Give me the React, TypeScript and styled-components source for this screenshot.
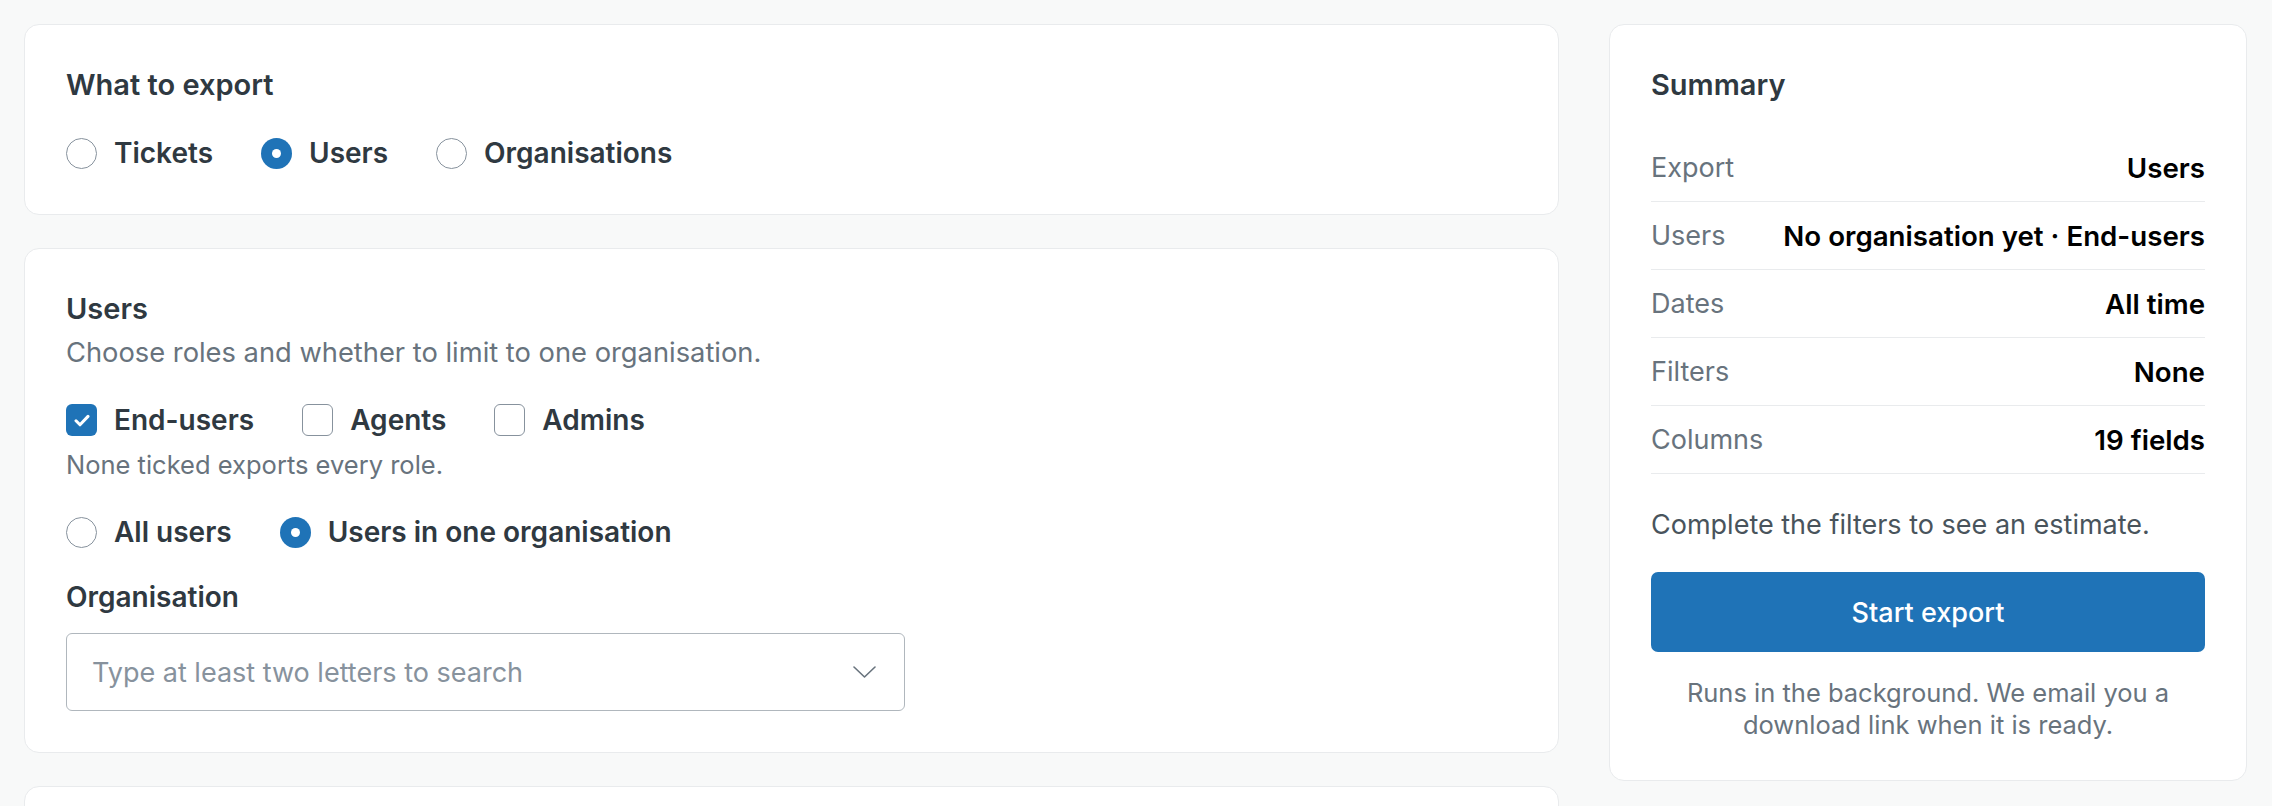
import React from 'react';
import styled, { createGlobalStyle } from 'styled-components';

const GlobalStyle = createGlobalStyle`
  html, body {
    margin: 0;
    padding: 0;
    overflow: hidden;
    background: #f8f9f9;
  }
  * {
    box-sizing: border-box;
  }
  body {
    font-family: Inter, "Noto Sans", "Liberation Sans", sans-serif;
    color: #2f3941;
  }
`;

const Page = styled.div`
  display: grid;
  grid-template-columns: 1fr 638px;
  gap: 50px;
  align-items: start;
  padding: 24px 25px 24px 24px;
`;

const Column = styled.div`
  display: flex;
  flex-direction: column;
  gap: 33px;
`;

const Card = styled.section<{ $minHeight?: number; $padBottom?: number }>`
  background: #fff;
  border: 1.5px solid #e9ebed;
  border-radius: 15px;
  padding: 40px 41px ${(p) => p.$padBottom ?? 43}px;
  min-height: ${(p) => (p.$minHeight ? `${p.$minHeight}px` : 'auto')};
`;

const Title = styled.h2`
  margin: 0;
  font-size: 29px;
  line-height: 40px;
  font-weight: 600;
  color: #2f3941;
`;

const Hint = styled.p<{ $small?: boolean }>`
  margin: ${(p) => (p.$small ? '10px 0 0' : '6px 0 0')};
  font-size: ${(p) => (p.$small ? '25.5px' : '27.3px')};
  line-height: ${(p) => (p.$small ? '33px' : '36px')};
  color: #68737d;
`;

const OptionRow = styled.div<{ $top: number }>`
  display: flex;
  align-items: center;
  gap: 48px;
  margin-top: ${(p) => p.$top}px;
`;

const Option = styled.label`
  display: flex;
  align-items: center;
  gap: 17px;
  font-size: 28px;
  line-height: 36px;
  font-weight: 600;
  color: #2f3941;
  cursor: pointer;
`;

const RadioMark = styled.span<{ $on?: boolean }>`
  width: 31px;
  height: 31px;
  border-radius: 50%;
  flex-shrink: 0;
  display: flex;
  align-items: center;
  justify-content: center;
  border: ${(p) => (p.$on ? 'none' : '1.5px solid #87929d')};
  background: ${(p) => (p.$on ? '#1f73b7' : '#fff')};

  &::after {
    content: '';
    display: ${(p) => (p.$on ? 'block' : 'none')};
    width: 9px;
    height: 9px;
    border-radius: 50%;
    background: #fff;
  }
`;

const CheckMark = styled.span<{ $on?: boolean }>`
  width: 31px;
  height: 32px;
  border-radius: 6px;
  flex-shrink: 0;
  display: flex;
  align-items: center;
  justify-content: center;
  border: ${(p) => (p.$on ? 'none' : '1.5px solid #87929d')};
  background: ${(p) => (p.$on ? '#1f73b7' : '#fff')};
`;

const FieldLabel = styled.div`
  margin-top: 29px;
  font-size: 28px;
  line-height: 36px;
  font-weight: 600;
  color: #2f3941;
`;

const Select = styled.div`
  margin-top: 18px;
  width: 839px;
  height: 78px;
  border: 1.5px solid #b0b7bd;
  border-radius: 6px;
  background: #fff;
  display: flex;
  align-items: center;
  justify-content: space-between;
  padding: 0 28px 0 25px;
`;

const Placeholder = styled.span`
  font-size: 27px;
  color: #87929d;
`;

const SummaryList = styled.dl`
  margin: 29px 0 0;
`;

const SummaryRow = styled.div`
  display: flex;
  justify-content: space-between;
  align-items: center;
  gap: 24px;
  padding: 16px 0 15px;
  border-bottom: 1.5px solid #e9ebed;
  line-height: 36px;
`;

const Term = styled.dt`
  font-size: 27px;
  color: #68737d;
`;

const Value = styled.dd`
  margin: 0;
  font-size: 27.7px;
  font-weight: 600;
  color: #000;
`;

const Estimate = styled.p`
  margin: 33px 0 0;
  font-size: 27px;
  line-height: 36px;
  color: #49545c;
`;

const PrimaryButton = styled.button`
  margin-top: 29px;
  width: 100%;
  height: 80px;
  border: none;
  border-radius: 7px;
  background: #1f73b7;
  color: #fff;
  font-family: inherit;
  font-size: 27px;
  font-weight: 500;
  cursor: pointer;
`;

const Footnote = styled.p`
  margin: 25px 0 0;
  text-align: center;
  font-size: 25.5px;
  line-height: 31.5px;
  color: #68737d;
`;

function Radio({ on, children }: { on?: boolean; children: React.ReactNode }) {
  return (
    <Option>
      <RadioMark $on={on} />
      {children}
    </Option>
  );
}

function Checkbox({ on, children }: { on?: boolean; children: React.ReactNode }) {
  return (
    <Option>
      <CheckMark $on={on}>
        {on && (
          <svg width="16" height="13" viewBox="0 0 16 13" fill="none">
            <path d="M2 6.8l4 4L14 2.4" stroke="#fff" strokeWidth="3" strokeLinecap="round" strokeLinejoin="round" />
          </svg>
        )}
      </CheckMark>
      {children}
    </Option>
  );
}

const summary = [
  ['Export', 'Users'],
  ['Users', 'No organisation yet · End-users'],
  ['Dates', 'All time'],
  ['Filters', 'None'],
  ['Columns', '19 fields'],
];

export default function App() {
  return (
    <>
      <GlobalStyle />
      <Page>
        <Column>
          <Card>
            <Title>What to export</Title>
            <OptionRow $top={30}>
              <Radio>Tickets</Radio>
              <Radio on>Users</Radio>
              <Radio>Organisations</Radio>
            </OptionRow>
          </Card>

          <Card $padBottom={41}>
            <Title>Users</Title>
            <Hint>Choose roles and whether to limit to one organisation.</Hint>
            <OptionRow $top={31}>
              <Checkbox on>End-users</Checkbox>
              <Checkbox>Agents</Checkbox>
              <Checkbox>Admins</Checkbox>
            </OptionRow>
            <Hint $small>None ticked exports every role.</Hint>
            <OptionRow $top={33}>
              <Radio>All users</Radio>
              <Radio on>Users in one organisation</Radio>
            </OptionRow>
            <FieldLabel>Organisation</FieldLabel>
            <Select>
              <Placeholder>Type at least two letters to search</Placeholder>
              <svg width="23" height="12" viewBox="0 0 23 12" fill="none">
                <path d="M1 1l10.5 10L22 1" stroke="#68737d" strokeWidth="1.6" strokeLinecap="round" strokeLinejoin="round" />
              </svg>
            </Select>
          </Card>

          <Card $minHeight={200} />
        </Column>

        <Card $padBottom={40}>
          <Title>Summary</Title>
          <SummaryList>
            {summary.map(([term, value]) => (
              <SummaryRow key={term}>
                <Term>{term}</Term>
                <Value>{value}</Value>
              </SummaryRow>
            ))}
          </SummaryList>
          <Estimate>Complete the filters to see an estimate.</Estimate>
          <PrimaryButton>Start export</PrimaryButton>
          <Footnote>Runs in the background. We email you a download link when it is ready.</Footnote>
        </Card>
      </Page>
    </>
  );
}
